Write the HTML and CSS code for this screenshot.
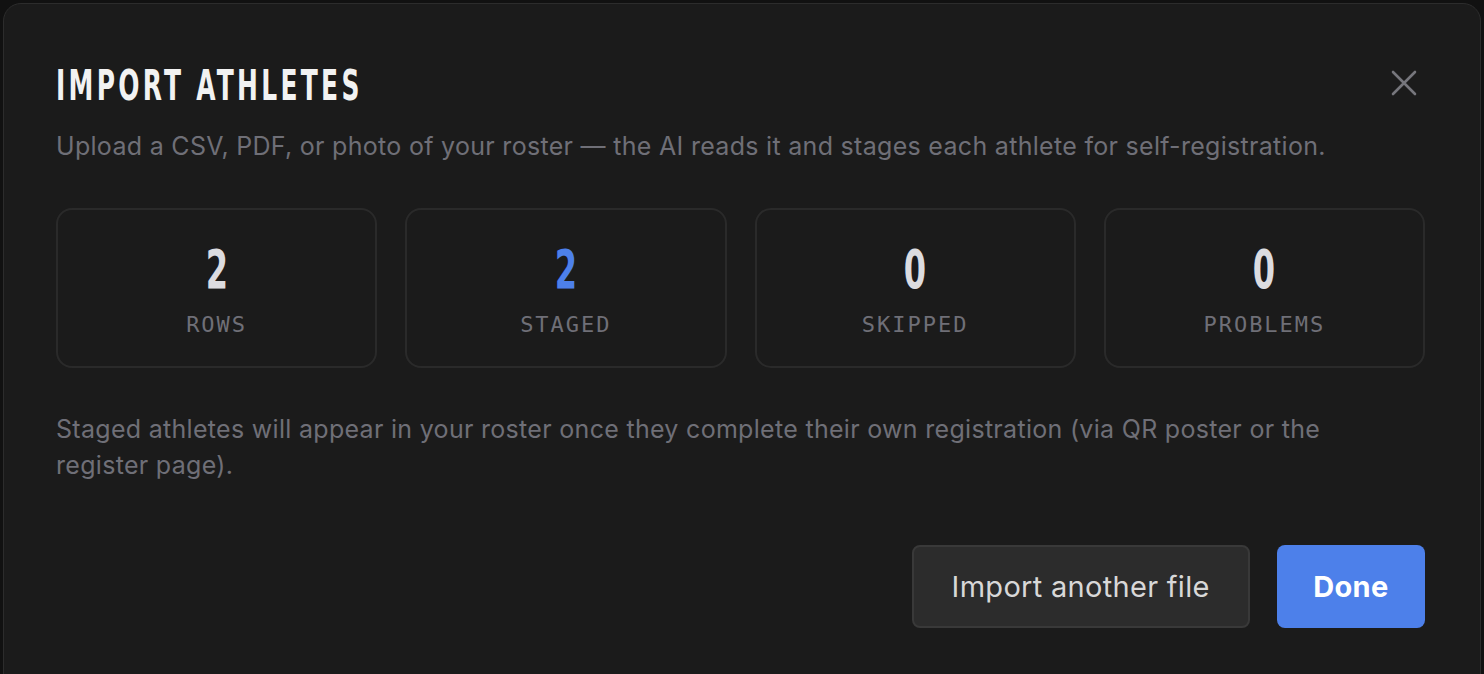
FILE: index.html
```html
<!DOCTYPE html>
<html lang="en">
<head>
<meta charset="utf-8">
<title>Import Athletes</title>
<link rel="stylesheet" href="styles.css">
</head>
<body>
<div class="modal">
  <div class="header">
    <h1 class="title">IMPORT ATHLETES</h1>
    <button class="close" aria-label="Close">
      <svg width="26" height="26" viewBox="0 0 26 26"><path d="M2 2 L24 24 M24 2 L2 24" stroke="#76767c" stroke-width="2.6" stroke-linecap="round" fill="none"/></svg>
    </button>
  </div>
  <p class="desc">Upload a CSV, PDF, or photo of your roster — the AI reads it and stages each athlete for self-registration.</p>
  <div class="stats">
    <div class="stat"><div class="num">2</div><div class="label">ROWS</div></div>
    <div class="stat"><div class="num blue">2</div><div class="label">STAGED</div></div>
    <div class="stat"><div class="num">0</div><div class="label">SKIPPED</div></div>
    <div class="stat"><div class="num">0</div><div class="label">PROBLEMS</div></div>
  </div>
  <p class="note">Staged athletes will appear in your roster once they complete their own registration (via QR poster or the register page).</p>
  <div class="actions">
    <button class="btn secondary">Import another file</button>
    <button class="btn primary">Done</button>
  </div>
</div>
</body>
</html>
```
FILE: styles.css
```css
html, body {
  margin: 0;
  padding: 0;
  background: #111111;
  height: 100%;
  overflow: hidden;
}
body {
  padding: 3px 3px 0 3px;
  box-sizing: border-box;
  font-family: Inter, "DejaVu Sans", sans-serif;
}
.modal {
  background: #1b1b1b;
  border: 1px solid #2c2c2c;
  border-radius: 18px;
  padding: 56px 55px 60px 52px;
  height: 760px;
  box-sizing: border-box;
}
.header {
  display: flex;
  justify-content: space-between;
  align-items: flex-start;
}
.title {
  margin: 0;
  display: inline-block;
  font-family: "DejaVu Sans Condensed", "DejaVu Sans", sans-serif;
  font-weight: 700;
  font-size: 42px;
  line-height: 52px;
  letter-spacing: 5px;
  color: #f2f2f2;
  transform: scaleX(0.66);
  transform-origin: left center;
  white-space: nowrap;
}
.close {
  background: none;
  border: 0;
  padding: 0;
  margin: 10px 8px 0 0;
  width: 26px;
  height: 26px;
  cursor: pointer;
}
.desc {
  margin: 18px 0 0;
  font-size: 25px;
  line-height: 32px;
  letter-spacing: 0.3px;
  color: #6f6f77;
}
.stats {
  display: grid;
  grid-template-columns: repeat(4, 1fr);
  gap: 28px;
  margin-top: 46px;
}
.stat {
  height: 160px;
  box-sizing: border-box;
  border: 2px solid #2a2a2a;
  border-radius: 16px;
  display: flex;
  flex-direction: column;
  align-items: center;
  padding-top: 32px;
}
.num {
  font-family: "DejaVu Sans Condensed", "DejaVu Sans", sans-serif;
  font-weight: 700;
  font-size: 54px;
  line-height: 56px;
  color: #dcdce0;
  transform: scaleX(0.66);
}
.num.blue { color: #4d80ea; }
.label {
  margin-top: 14px;
  font-family: "DejaVu Sans Mono", "Liberation Mono", monospace;
  font-size: 22px;
  letter-spacing: 2px;
  color: #6f6f77;
}
.note {
  margin: 43px 0 0;
  max-width: 1340px;
  font-size: 25px;
  line-height: 36px;
  letter-spacing: 0.3px;
  color: #6f6f77;
}
.actions {
  display: flex;
  justify-content: flex-end;
  gap: 27px;
  margin-top: 62px;
}
.btn {
  height: 83px;
  border-radius: 8px;
  font-family: Inter, "DejaVu Sans", sans-serif;
  font-size: 29px;
  letter-spacing: 0.3px;
  cursor: pointer;
}
.secondary {
  padding: 0 38px;
  background: #2c2c2c;
  border: 2px solid #393939;
  color: #d8d8d8;
}
.primary {
  padding: 0 36.5px;
  background: #4d80ea;
  border: 0;
  color: #ffffff;
  font-weight: 700;
}
```
